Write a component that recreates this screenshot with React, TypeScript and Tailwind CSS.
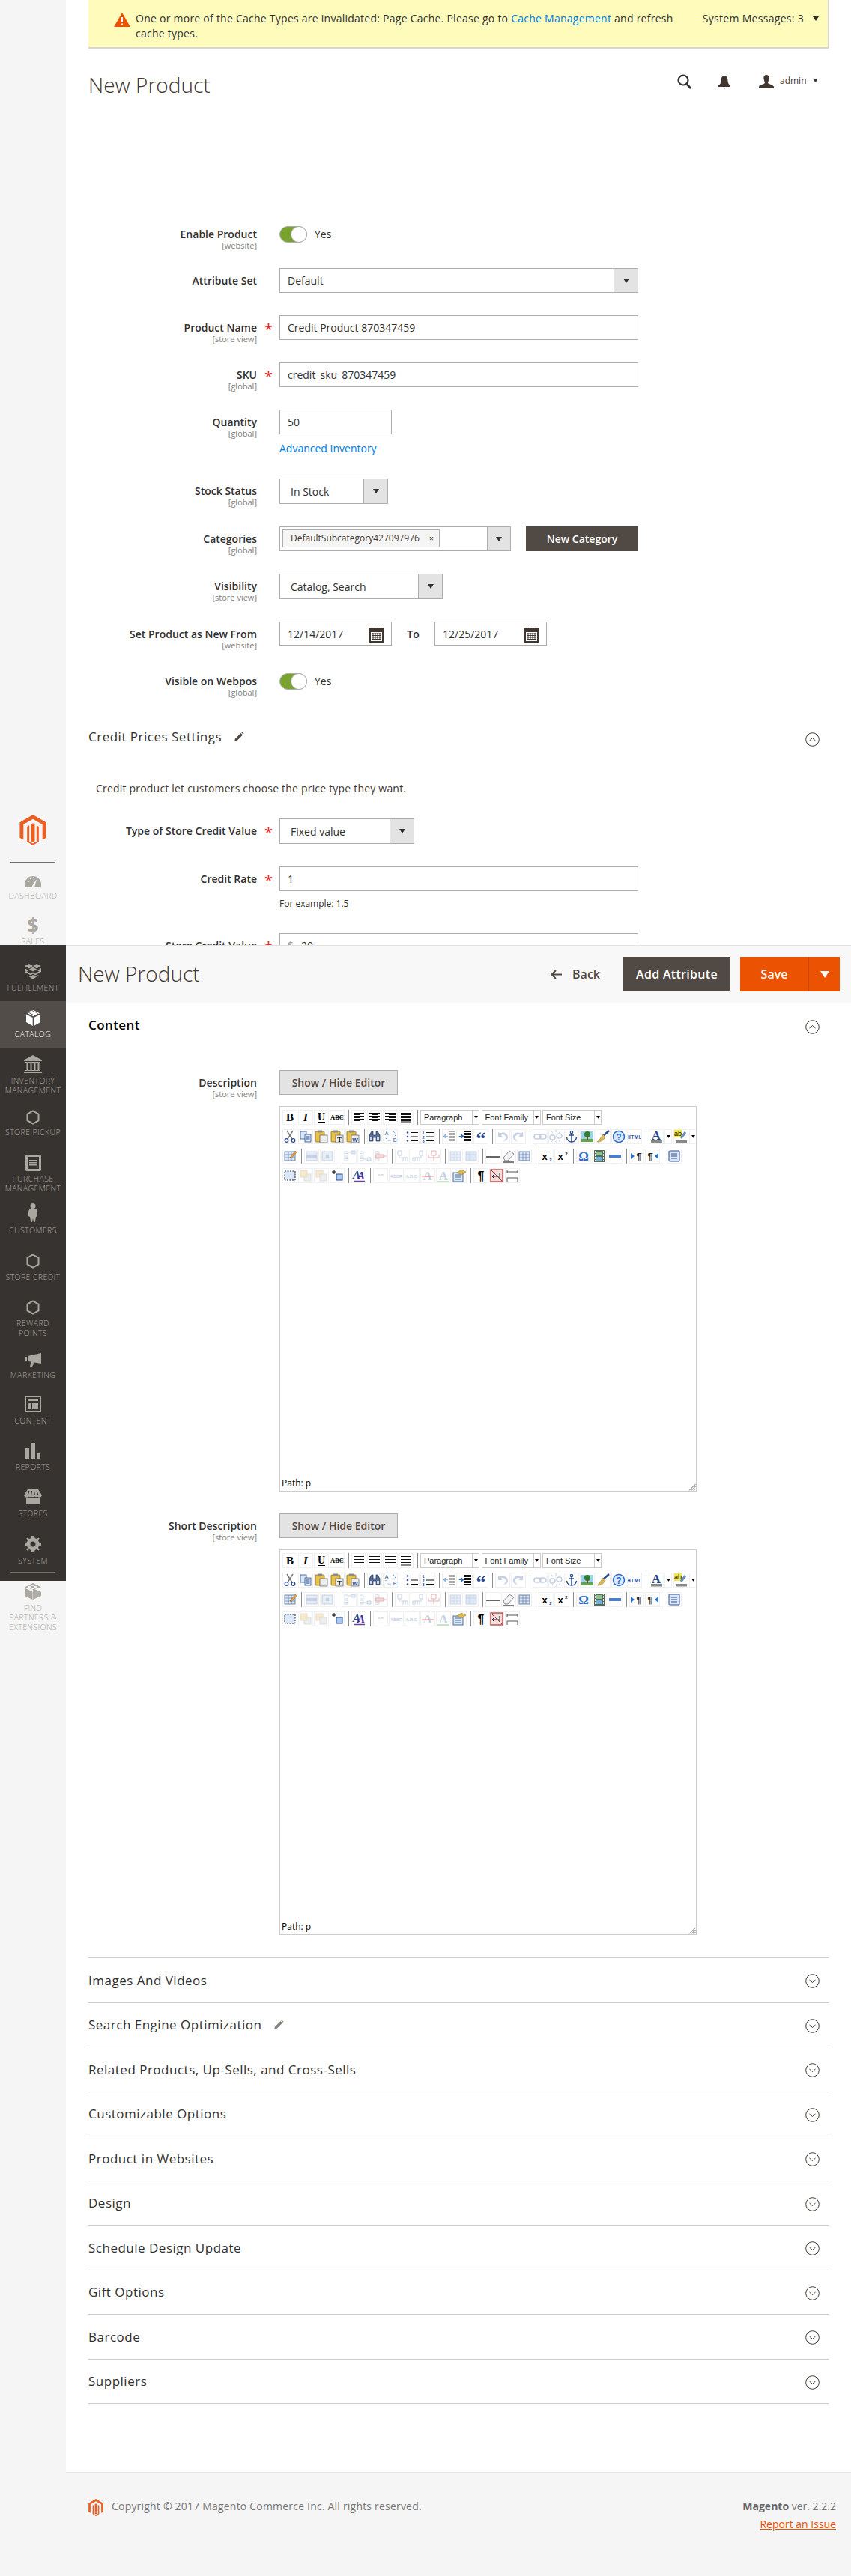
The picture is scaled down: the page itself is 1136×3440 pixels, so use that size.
import React from "react";

const Chevron = ({ up }: { up?: boolean }) => (
  <svg width="19" height="19" viewBox="0 0 19 19" className="shrink-0">
    <circle cx="9.5" cy="9.5" r="8.8" fill="none" stroke="#41362f" strokeWidth="1" />
    <path d={up ? "M5.5 11 L9.5 7.5 L13.5 11" : "M5.5 8 L9.5 11.5 L13.5 8"} fill="none" stroke="#41362f" strokeWidth="1" />
  </svg>
);

const Pencil = ({ color = "#514943" }: { color?: string }) => (
  <svg width="14" height="14" viewBox="0 0 14 14">
    <path d="M1 13 L2 9.5 L9.5 2 L12 4.5 L4.5 12 Z" fill={color} />
    <path d="M10.3 1.2 L11.3 .4 L13.6 2.7 L12.7 3.7 Z" fill={color} />
  </svg>
);

const MLogo = ({ w, h }: { w: number; h: number }) => (
  <svg width={w} height={h} viewBox="0 0 36 42">
    <path d="M18 0 L36 10.5 V31.5 L31 34.4 V13.4 L18 6 L5 13.4 V34.4 L0 31.5 V10.5 Z" fill="#eb5f22" />
    <path d="M15.5 13 L18 11.6 L20.5 13 V36 L18 37.4 L15.5 36 Z" fill="#eb5f22" />
    <path d="M10 16.3 L13 14.6 V36.6 L18 39.4 L23 36.6 V14.6 L26 16.3 V37 L18 42 L10 37 Z" fill="#eb5f22" />
  </svg>
);

const Hex = () => (
  <svg width="18" height="20" viewBox="0 0 18 20">
    <path d="M9 1.5 L16.5 5.7 V14.3 L9 18.5 L1.5 14.3 V5.7 Z" fill="none" stroke="currentColor" strokeWidth="2" />
  </svg>
);

const SideIcons: Record<string, React.ReactNode> = {
  dashboard: (
    <svg width="22" height="16" viewBox="0 0 22 16">
      <path d="M0 16 V12 A11 11 0 0 1 22 12 V16 H13 L16 5 L10 14 L10 16 Z" fill="currentColor" />
      <circle cx="5" cy="8" r="1" fill="#f5f5f5" />
      <circle cx="8" cy="4.5" r="1" fill="#f5f5f5" />
      <circle cx="12" cy="3" r="1" fill="#f5f5f5" />
    </svg>
  ),
  sales: <span className="text-[27px] leading-[24px] font-bold text-current">$</span>,
  fulfillment: (
    <svg width="22" height="21" viewBox="0 0 22 21">
      <path d="M6 0 L11 3 L6 6.5 L0 3 Z M16 0 L22 3 L16 6.5 L11 3 Z M6 7.5 L11 4.5 L16 7.5 L11 10.5 Z M0 6 L5 9 L3 10.5 L8 13.5 L11 11.5 L14 13.5 L19 10.5 L17 9 L22 6 L22 11 L14 15.5 L11 13.5 L8 15.5 L0 11 Z" fill="currentColor" />
      <path d="M3 15 L8 17 L11 15 L14 17 L19 15 L11 21 Z" fill="currentColor" />
    </svg>
  ),
  catalog: (
    <svg width="19" height="21" viewBox="0 0 19 21">
      <path d="M0 5.5 L8.7 10 V21 L0 16 Z" fill="currentColor" />
      <path d="M19 5.5 L10.3 10 V21 L19 16 Z" fill="currentColor" />
      <path d="M3 2.6 L7 .6 L15.5 4.8 L11.5 7 Z" fill="currentColor" />
      <path d="M1.5 4 L2.6 3.3 L10.8 7.4 L9.5 8.3 Z" fill="currentColor" />
      <path d="M8.2 .2 L9.5 0 L18 4.2 L16.5 4.9 Z" fill="currentColor" />
    </svg>
  ),
  inventory: (
    <svg width="24" height="24" viewBox="0 0 24 24">
      <path d="M12 0 L24 6.5 V8 H0 V6.5 Z" fill="currentColor" />
      <path d="M2 9 H22 V10 H2 Z M2 20 H22 V21 H2 Z M0 22 H24 V24 H0 Z" fill="currentColor" />
      <path d="M3.5 10 H5.5 V20 H3.5 Z M8.5 10 H10.5 V20 H8.5 Z M13.5 10 H15.5 V20 H13.5 Z M18.5 10 H20.5 V20 H18.5 Z" fill="currentColor" />
    </svg>
  ),
  hex: <Hex />,
  purchase: (
    <svg width="21" height="22" viewBox="0 0 21 22">
      <path fillRule="evenodd" d="M2 0 H19 Q21 0 21 2 V20 Q21 22 19 22 H2 Q0 22 0 20 V2 Q0 0 2 0 Z M3 3 V19 H18 V3 Z" fill="currentColor" />
      <path d="M5 7 H16 V8.5 H5 Z M5 10 H16 V11.5 H5 Z M5 13 H16 V14.5 H5 Z M5 16 H16 V17 H5 Z" fill="currentColor" />
    </svg>
  ),
  customers: (
    <svg width="12" height="25" viewBox="0 0 12 25">
      <circle cx="6" cy="3.6" r="3.6" fill="currentColor" />
      <path d="M1.5 8 H10.5 L12 10 V17 L10 18 L8.8 25 H7 L6 20 L5 25 H3.2 L2 18 L0 17 V10 Z" fill="currentColor" />
    </svg>
  ),
  marketing: (
    <svg width="22" height="18" viewBox="0 0 22 18">
      <path d="M0 5 H3 V10 H0 Z M4 4 L22 0 V14 L13 12.5 L10 18 H7 L8.5 11.5 L4 11 Z" fill="currentColor" />
    </svg>
  ),
  content: (
    <svg width="22" height="22" viewBox="0 0 22 22">
      <path fillRule="evenodd" d="M0 0 H22 V22 H0 Z M2 2 V20 H20 V2 Z" fill="currentColor" />
      <path d="M4 4 H18 V7 H4 Z M4 9 H8 V18 H4 Z M10 9 H18 V18 H10 Z" fill="currentColor" />
    </svg>
  ),
  reports: (
    <svg width="20" height="21" viewBox="0 0 20 21">
      <path d="M0 7 H5 V21 H0 Z M8 0 H13 V21 H8 Z M15.5 14 H20 V21 H15.5 Z" fill="currentColor" />
    </svg>
  ),
  stores: (
    <svg width="24" height="20" viewBox="0 0 24 20">
      <path d="M3 20 V11 H21 V20 Z" fill="currentColor" />
      <path d="M5 0 H19 L24 8 Q23 11 21 10.5 Q19 11 18 9.5 Q16 11 14.5 9.5 Q12 11 9.5 9.5 Q8 11 6 9.5 Q5 11 3 10.5 Q1 11 0 8 Z" fill="currentColor" />
      <path d="M7 2 L5 8 M10.5 2 L9.5 8 M13.5 2 L14.5 8 M17 2 L19 8" stroke="#373330" strokeWidth="1.2" />
    </svg>
  ),
  system: (
    <svg width="22" height="22" viewBox="0 0 22 22">
      <path fillRule="evenodd" d="M9 0 H13 L13.6 3 L16 4 L18.6 2.4 L19.6 3.4 L18 6 L19 8.4 L22 9 V13 L19 13.6 L18 16 L19.6 18.6 L18.6 19.6 L16 18 L13.6 19 L13 22 H9 L8.4 19 L6 18 L3.4 19.6 L2.4 18.6 L4 16 L3 13.6 L0 13 V9 L3 8.4 L4 6 L2.4 3.4 L3.4 2.4 L6 4 L8.4 3 Z M11 7.5 A3.5 3.5 0 1 0 11 14.5 A3.5 3.5 0 1 0 11 7.5 Z" fill="currentColor" />
    </svg>
  ),
  partners: (
    <svg width="22" height="22" viewBox="0 0 22 22">
      <path d="M11 7 L22 12 V17 L11 22 Z" fill="currentColor" opacity=".9" />
      <path d="M11 8.5 L0 5.5 L11 0 L22 5.5 Z" fill="currentColor" />
      <path d="M0 6.5 L10.5 11.5 V22 L0 17 Z" fill="currentColor" />
      <ellipse cx="7" cy="5" rx="2.4" ry="1.3" fill="#f5f5f5" />
      <ellipse cx="15" cy="5" rx="2.4" ry="1.3" fill="#f5f5f5" />
      <ellipse cx="11" cy="3" rx="2.4" ry="1.1" fill="#f5f5f5" />
      <ellipse cx="11" cy="7" rx="2.4" ry="1.1" fill="#f5f5f5" />
    </svg>
  ),
};

function SideItem({ icon, lines, shift = "", active, h = "h-[62px]" }: { icon: string; lines: string[]; shift?: string; active?: boolean; h?: string }) {
  return (
    <div className={`flex flex-col items-center ${h} ${active ? "bg-[#524d49] text-white" : ""}`}>
      <div className="h-[28px] mt-[8px] flex items-center justify-center">
        <div className={`flex ${shift}`}>{SideIcons[icon]}</div>
      </div>
      <div className={`mt-[1.5px] text-[10.5px] leading-[13px] font-light tracking-[0.4px] text-center whitespace-nowrap ${active ? "text-white" : ""}`}>
        {lines.map((l) => (
          <div key={l}>{l}</div>
        ))}
      </div>
    </div>
  );
}

function Sidebar() {
  return (
    <aside className="w-[88px] shrink-0 bg-[#f5f5f5] pt-[1088px] flex flex-col text-[#aaa6a0]">
      <div className="flex justify-center">
        <MLogo w={36} h={41} />
      </div>
      <div className="mx-[14px] mt-[22px] h-px bg-[#736d68]" />
      <SideItem icon="dashboard" lines={["DASHBOARD"]} shift="mt-[6px]" h="h-[61px]" />
      <div className="h-[49px] overflow-hidden">
        <SideItem icon="sales" lines={["SALES"]} />
      </div>
      <div className="bg-[#373330] h-[849px]">
        <SideItem icon="fulfillment" lines={["FULFILLMENT"]} h="h-[75px] pt-[13px]" />
        <SideItem icon="catalog" lines={["CATALOG"]} active />
        <SideItem icon="inventory" lines={["INVENTORY", "MANAGEMENT"]} h="h-[69px]" />
        <SideItem icon="hex" lines={["STORE PICKUP"]} shift="mt-[4px]" />
        <SideItem icon="purchase" lines={["PURCHASE", "MANAGEMENT"]} shift="mt-[2px]" h="h-[69px]" />
        <SideItem icon="customers" lines={["CUSTOMERS"]} shift="mb-[4px]" />
        <SideItem icon="hex" lines={["STORE CREDIT"]} shift="mt-[2px]" />
        <SideItem icon="hex" lines={["REWARD", "POINTS"]} shift="mt-[2px]" h="h-[69px]" />
        <SideItem icon="marketing" lines={["MARKETING"]} shift="mt-[4px]" h="h-[61px]" />
        <SideItem icon="content" lines={["CONTENT"]} />
        <SideItem icon="reports" lines={["REPORTS"]} />
        <SideItem icon="stores" lines={["STORES"]} h="h-[63px]" />
        <SideItem icon="system" lines={["SYSTEM"]} h="h-[61px]" />
        <div className="mx-[14px] mt-[-2px] h-px bg-[#736d68]" />
      </div>
      <SideItem icon="partners" lines={["FIND", "PARTNERS &", "EXTENSIONS"]} h="h-[90px] mt-[-8px]" />
    </aside>
  );
}

function Label({ text, scope }: { text?: string; scope?: string }) {
  return (
    <div className="w-[225px] shrink-0 pt-[8px] text-right">
      <div className="text-[14px] leading-[18px] font-semibold text-[#303030]">{text}</div>
      {scope && <div className="text-[11px] leading-[12px] text-[#808080]">[{scope}]</div>}
    </div>
  );
}

function Row({ text, scope, req, children, h = "h-[33px]" }: { text: string; scope?: string; req?: boolean; children?: React.ReactNode; h?: string }) {
  return (
    <div className={`flex ${h}`}>
      <Label text={text} scope={scope} />
      <div className="w-[30px] shrink-0 pl-[10px] pt-[8px] text-[#e22626] text-[20px] leading-[22px]">{req ? "*" : ""}</div>
      <div className="flex-1">{children}</div>
    </div>
  );
}

const Input = ({ value, w = "w-[479px]", h = "h-[33px]" }: { value: string; w?: string; h?: string }) => (
  <div className={`${w} ${h} border border-[#adadad] bg-white flex items-center pl-[10px] text-[14px] text-[#303030]`}>{value}</div>
);

const Tri = ({ w = 8, color = "#303030" }: { w?: number; color?: string }) => (
  <svg width={w} height={w * 0.75} viewBox="0 0 8 6">
    <path d="M0 0 H8 L4 6 Z" fill={color} />
  </svg>
);

const Select = ({ value, w, h = "h-[33px]", pl = "pl-[10px]" }: { value: string; w: string; h?: string; pl?: string }) => (
  <div className={`${w} ${h} border border-[#adadad] bg-white flex text-[14px] text-[#303030]`}>
    <div className={`flex-1 flex items-center ${pl}`}>{value}</div>
    <div className="w-[32px] bg-[#e3e3e3] border-l border-[#adadad] flex items-center justify-center">
      <Tri />
    </div>
  </div>
);

const Toggle = () => (
  <div className="flex items-center h-[33px]">
    <div className="relative w-[37px] h-[22px] rounded-full bg-[#79a22e] border border-[#adadad]">
      <div className="absolute right-[-1px] top-[-1px] w-[22px] h-[22px] rounded-full bg-white border border-[#adadad]" />
    </div>
    <span className="ml-[10px] text-[14px] text-[#303030]">Yes</span>
  </div>
);

const Calendar = () => (
  <svg width="21" height="22" viewBox="0 0 21 22">
    <path d="M1 3 H20 V22 H1 Z" fill="#41362f" />
    <path d="M3 8 H18 V20 H3 Z" fill="#fff" />
    <path d="M5 2 H7 V6 H5 Z M14 2 H16 V6 H14 Z" fill="#41362f" />
    <path d="M5 10 H16 M5 12.5 H16 M5 15 H16 M5 17.5 H16 M6 9 V19 M9 9 V19 M12 9 V19 M15 9 V19" stroke="#41362f" strokeWidth="1" />
  </svg>
);

const DateField = ({ value }: { value: string }) => (
  <div className="w-[150px] h-[33px] border border-[#adadad] bg-white flex items-center justify-between pl-[10px] pr-[9px] text-[14px] text-[#303030]">
    <span>{value}</span>
    <Calendar />
  </div>
);

function TopForm() {
  return (
    <div className="h-[1262px] overflow-hidden bg-white px-[30px]">
      <div className="h-[65px] bg-[#fffbbb] border-b-2 border-r border-[#d6d6d6] flex pl-[34px] pr-[12px]">
        <div className="pt-[17px]">
          <svg width="22" height="19" viewBox="0 0 22 19">
            <path d="M11 0 L22 19 H0 Z" fill="#eb5202" />
            <path d="M10 6 H12 V13 H10 Z M10 14.5 H12 V16.5 H10 Z" fill="#fff" />
          </svg>
        </div>
        <div className="ml-[7px] w-[724px] pt-[15px] text-[14px] leading-[20px] tracking-[0.25px] text-[#303030]">
          One or more of the Cache Types are invalidated: Page Cache. Please go to <span className="text-[#007bdb]">Cache Management</span> and refresh cache types.
        </div>
        <div className="ml-[36px] pt-[15px] flex text-[14px] leading-[20px] tracking-[0.3px] text-[#303030] whitespace-nowrap">
          System Messages: 3
          <span className="ml-[12px] mt-[7px]">
            <Tri />
          </span>
        </div>
      </div>
      <div className="flex justify-between mt-[30px]">
        <h1 className="text-[28px] leading-[36px] font-light text-[#41362f]">New Product</h1>
        <div className="flex items-start pt-[4px] pr-[14px] text-[#41362f]">
          <svg width="20" height="20" viewBox="0 0 20 20">
            <circle cx="8" cy="8" r="6.5" fill="none" stroke="#303030" strokeWidth="2.2" />
            <path d="M12.5 13 L18 19" stroke="#303030" strokeWidth="2.6" />
          </svg>
          <svg width="16" height="18" viewBox="0 0 16 18" className="ml-[35px] mt-[2px]">
            <path d="M8 0 C11 0 12.5 3 12.5 7 C12.5 10 14 12 16 13.5 V15 H0 V13.5 C2 12 3.5 10 3.5 7 C3.5 3 5 0 8 0 Z M6.5 16 H9.5 L8 18 Z" fill="#41362f" />
          </svg>
          <svg width="20" height="18" viewBox="0 0 20 18" className="ml-[38px] mt-[1px]">
            <path d="M10 0 C13 0 14 2.5 13.5 5.5 C13 8 12 9.5 12 11 C13 12.5 20 13.5 20 16 V18 H0 V16 C0 13.5 7 12.5 8 11 C8 9.5 7 8 6.500 5.500 C6 2.500 7 0 10 0 Z" fill="#41362f" />
          </svg>
          <span className="ml-[8px] w-[35px] text-[12px] leading-[18px] text-[#41362f]">admin</span>
          <span className="ml-[9px] mt-[6px]">
            <Tri w={7} color="#41362f" />
          </span>
        </div>
      </div>
      <div className="mt-[165px] flex flex-col gap-[30px]">
        <Row text="Enable Product" scope="website" h="h-[32px]">
          <Toggle />
        </Row>
        <Row text="Attribute Set">
          <Select value="Default" w="w-[479px]" />
        </Row>
        <Row text="Product Name" scope="store view" req>
          <Input value="Credit Product 870347459" />
        </Row>
        <Row text="SKU" scope="global" req>
          <Input value="credit_sku_870347459" />
        </Row>
        <Row text="Quantity" scope="global" h="h-[62px]">
          <Input value="50" w="w-[150px]" />
          <div className="mt-[9px] text-[14px] leading-[20px] text-[#007bdb]">Advanced Inventory</div>
        </Row>
        <Row text="Stock Status" scope="global" h="h-[34px]">
          <Select value="In Stock" w="w-[145px]" h="h-[34px]" pl="pl-[14px]" />
        </Row>
        <Row text="Categories" scope="global">
          <div className="flex">
            <div className="w-[309px] h-[33px] border border-[#adadad] bg-white flex">
              <div className="flex-1 pl-[3px] pt-[3px]">
                <div className="w-[210px] h-[24px] border border-[#adadad] bg-[#f5f5f5] flex items-center justify-between pl-[10px] pr-[7px] text-[12px] text-[#41362f]">
                  <span>DefaultSubcategory427097976</span>
                  <span className="text-[11px] text-[#514943]">×</span>
                </div>
              </div>
              <div className="w-[31px] bg-[#e3e3e3] border-l border-[#adadad] flex items-center justify-center">
                <Tri />
              </div>
            </div>
            <div className="ml-[20px] w-[150px] h-[33px] bg-[#514943] text-white text-[14px] font-semibold flex items-center justify-center">New Category</div>
          </div>
        </Row>
        <Row text="Visibility" scope="store view" h="h-[34px]">
          <Select value="Catalog, Search" w="w-[218px]" h="h-[34px]" pl="pl-[14px]" />
        </Row>
        <Row text="Set Product as New From" scope="website">
          <div className="flex items-center">
            <DateField value="12/14/2017" />
            <span className="w-[57px] text-center text-[14px] font-semibold text-[#303030]">To</span>
            <DateField value="12/25/2017" />
          </div>
        </Row>
        <Row text="Visible on Webpos" scope="global">
          <Toggle />
        </Row>
      </div>
      <div className="mt-[46px] flex items-center justify-between pr-[12px] h-[24px]">
        <div className="flex items-center">
          <span className="text-[17px] font-medium tracking-[0.5px] text-[#303030]">Credit Prices Settings</span>
          <span className="ml-[16px] flex">
            <Pencil />
          </span>
        </div>
        <span className="mt-[6px] flex">
          <Chevron up />
        </span>
      </div>
      <p className="mt-[47px] pl-[10px] text-[14px] leading-[20px] tracking-[0.2px] text-[#41362f]">Credit product let customers choose the price type they want.</p>
      <div className="mt-[30px] flex flex-col gap-[30px]">
        <Row text="Type of Store Credit Value" req h="h-[34px]">
          <Select value="Fixed value" w="w-[180px]" h="h-[34px]" pl="pl-[14px]" />
        </Row>
        <Row text="Credit Rate" req h="h-[59px]">
          <Input value="1" />
          <div className="mt-[8px] text-[12px] leading-[18px] text-[#303030]">For example: 1.5</div>
        </Row>
        <Row text="Store Credit Value" req>
          <div className="w-[479px] h-[33px] border border-[#adadad] bg-white flex items-center text-[14px] text-[#303030]">
            <span className="w-[28px] pl-[10px] text-[#999]">$</span>
            20
          </div>
        </Row>
      </div>
    </div>
  );
}

function StickyBar() {
  return (
    <div className="h-[78px] bg-[#f8f8f8] border-y border-[#e3e3e3] flex items-center justify-between pl-[16px] pr-[15px]">
      <div className="text-[28px] font-light text-[#41362f] mb-[2px]">New Product</div>
      <div className="flex items-center">
        <svg width="15" height="13" viewBox="0 0 15 13" className="mr-[14px]">
          <path d="M7 1 L1.500 6.500 L7 12 M1.500 6.500 H15" fill="none" stroke="#514943" strokeWidth="2" />
        </svg>
        <span className="text-[16px] font-semibold text-[#514943]">Back</span>
        <div className="ml-[31px] w-[143px] h-[46px] bg-[#514943] text-white text-[16px] font-semibold flex items-center justify-center tracking-[0.3px]">Add Attribute</div>
        <div className="ml-[13px] w-[133px] h-[46px] bg-[#eb5202] text-white text-[16px] font-semibold flex">
          <div className="w-[92px] border-r border-[#c9460a] flex items-center justify-center">Save</div>
          <div className="flex-1 flex items-center justify-center">
            <svg width="12" height="9" viewBox="0 0 12 9">
              <path d="M0 0 H12 L6 9 Z" fill="#fff" />
            </svg>
          </div>
        </div>
      </div>
    </div>
  );
}

const N = "#2b4a8f";
const D = "#c5d0e2";
const K = "#111";
const Page = ({ x, y, c = "#fff", s = N }: { x: number; y: number; c?: string; s?: string }) => (
  <rect x={x} y={y} width="8" height="10" fill={c} stroke={s} strokeWidth=".8" />
);
const lines = (ys: number[], x1: number, x2: number, c = K) => ys.map((y) => <path key={y + "-" + x1} d={`M${x1} ${y} H${x2}`} stroke={c} strokeWidth="1" />);
const alt = (x3: number, x4: number) => (
  <>
    {lines([4.5, 8.5, 12.5], 3, 17)}
    {lines([6.5, 10.5, 14.5], x3, x4)}
  </>
);
const Clip = ({ children }: { children?: React.ReactNode }) => (
  <>
    <rect x="2" y="3" width="12" height="14" rx="1" fill="#e8c24a" stroke="#8a6a1e" strokeWidth=".8" />
    <rect x="5" y="1.500" width="6" height="3" fill="#8a8a8a" />
    <rect x="8" y="8" width="10" height="10" fill="#eee" stroke="#555" strokeWidth=".7" />
    {children}
  </>
);
const grid = (c: string, fill: string) => (
  <>
    <rect x="3" y="4" width="14" height="12" fill={fill} stroke={c} strokeWidth=".8" />
    <path d="M3 8 H17 M3 12 H17 M8 4 V16 M12 4 V16" stroke={c} strokeWidth=".6" />
  </>
);
const stepIcon = (a: React.ReactNode) => (
  <>
    <path d="M3 4 H8 V9 H3 M3 11 H8 V16 H3 M3 6.500 H8 M3 13.500 H8" fill="none" stroke={D} strokeWidth=".8" />
    {a}
  </>
);
const T: Record<string, React.ReactNode> = {
  bold: <text x="10" y="15" textAnchor="middle" fontFamily="Liberation Serif" fontWeight="700" fontSize="15" fill="#000">B</text>,
  italic: <text x="10" y="15" textAnchor="middle" fontFamily="Liberation Serif" fontStyle="italic" fontWeight="700" fontSize="15" fill="#000">I</text>,
  underline: (
    <>
      <text x="10" y="14" textAnchor="middle" fontFamily="Liberation Serif" fontWeight="700" fontSize="14" fill="#000">U</text>
      <path d="M5 16.500 H15" stroke="#000" />
    </>
  ),
  strike: (
    <>
      <text x="10" y="13" textAnchor="middle" fontFamily="Liberation Serif" fontSize="8.500" fontWeight="700" fill="#000">ABC</text>
      <path d="M2 10 H18" stroke="#000" strokeWidth=".8" />
    </>
  ),
  left: alt(3, 12),
  center: alt(6, 14),
  right: alt(8, 17),
  full: lines([4.5, 6.5, 8.5, 10.5, 12.5, 14.5, 16], 3, 17),
  cut: (
    <>
      <path d="M6 2 L13 13 M14 2 L7 13" stroke="#777" strokeWidth="1.400" />
      <circle cx="5.500" cy="15" r="2.300" fill="none" stroke={N} strokeWidth="1.300" />
      <circle cx="14.500" cy="15" r="2.300" fill="none" stroke={N} strokeWidth="1.300" />
    </>
  ),
  copy: (
    <>
      <Page x={3} y={3} c="#dbe8f8" />
      <Page x={9} y={7} c="#dbe8f8" />
      {lines([10, 12, 14], 10.5, 15.500, N)}
    </>
  ),
  paste: <Clip />,
  pastetext: (
    <Clip>
      <text x="13" y="16.500" textAnchor="middle" fontFamily="Liberation Serif" fontWeight="700" fontSize="9" fill="#000">T</text>
    </Clip>
  ),
  pasteword: (
    <Clip>
      <text x="13" y="16.500" textAnchor="middle" fontFamily="Liberation Sans" fontWeight="700" fontSize="8" fill={N}>W</text>
    </Clip>
  ),
  find: (
    <>
      <path d="M3 8 L6 3 H8 V8 H12 V3 H14 L17 8 V16 H12 V11 H8 V16 H3 Z" fill="#5a6f96" stroke="#22345a" strokeWidth=".7" />
      <rect x="4" y="11" width="3" height="4" fill="#c6d6ee" />
      <rect x="13" y="11" width="3" height="4" fill="#c6d6ee" />
    </>
  ),
  replace: (
    <>
      <text x="5" y="8" fontFamily="Liberation Sans" fontSize="7" fill={N} textAnchor="middle">A</text>
      <text x="16" y="17" fontFamily="Liberation Sans" fontSize="7" fill={N} textAnchor="middle">B</text>
      <path d="M14 3 C17 5 17 7 16 10 M4 10 C4 14 6 16 11 15" fill="none" stroke="#3b78d8" strokeDasharray="1 1" />
    </>
  ),
  bullist: (
    <>
      <circle cx="4" cy="4.500" r="1.300" fill={N} />
      <circle cx="4" cy="10" r="1.300" fill={N} />
      <circle cx="4" cy="15.500" r="1.300" fill={N} />
      {lines([4.5, 10, 15.5], 8, 18)}
    </>
  ),
  numlist: (
    <>
      <text x="4" y="7" fontFamily="Liberation Sans" fontWeight="700" fontSize="5.500" fill={N} textAnchor="middle">1</text>
      <text x="4" y="12.500" fontFamily="Liberation Sans" fontWeight="700" fontSize="5.500" fill={N} textAnchor="middle">2</text>
      <text x="4" y="18" fontFamily="Liberation Sans" fontWeight="700" fontSize="5.500" fill={N} textAnchor="middle">3</text>
      {lines([4.5, 10, 15.5], 8, 18)}
    </>
  ),
  outdent: (
    <>
      {lines([3.5, 5.5, 7.5, 9.5, 11.5, 13.5, 15.5], 9, 17, "#aaa")}
      <path d="M2 9.500 L5 7 V12 Z M5 9.500 H8" fill="#8fb0de" stroke="#8fb0de" />
    </>
  ),
  indent: (
    <>
      {lines([3.5, 5.5, 7.5, 9.5, 11.5, 13.5, 15.5], 9, 18)}
      <path d="M8 9.500 L5 7 V12 Z M2 9.500 H5" fill="#2e6bc6" stroke="#2e6bc6" />
    </>
  ),
  blockquote: <text x="10" y="21" textAnchor="middle" fontFamily="Liberation Serif" fontWeight="700" fontSize="26" fill={N}>“</text>,
  undo: <path d="M4 4 V10 H10 L7.500 7.800 C10 6 13 7 14 10 C14.500 13 13 15 11 16 C15 16 17 13 17 10 C16 5 11 3 6.500 5.600 Z" fill={D} />,
  redo: <path d="M16 4 V10 H10 L12.500 7.800 C10 6 7 7 6 10 C5.500 13 7 15 9 16 C5 16 3 13 3 10 C4 5 9 3 13.500 5.600 Z" fill={D} />,
  link: (
    <>
      <rect x="2" y="7" width="9" height="6" rx="3" fill="none" stroke={D} strokeWidth="1.600" />
      <rect x="9" y="7" width="9" height="6" rx="3" fill="none" stroke={D} strokeWidth="1.600" />
    </>
  ),
  unlink: (
    <>
      <rect x="2" y="8" width="7" height="6" rx="3" fill="none" stroke={D} strokeWidth="1.600" />
      <rect x="11" y="6" width="7" height="6" rx="3" fill="none" stroke={D} strokeWidth="1.600" />
      <path d="M10 1 V4 M10 16 V19 M4 3 L6 5 M16 3 L14 5 M4 17 L6 15 M16 17 L14 15" stroke={D} />
    </>
  ),
  anchor: (
    <>
      <circle cx="10" cy="4" r="1.700" fill="none" stroke={N} strokeWidth="1.200" />
      <path d="M10 5.500 V17 M7 8 H13 M3.500 11 C4 15 7 17 10 17 C13 17 16 15 16.500 11" fill="none" stroke={N} strokeWidth="1.500" />
    </>
  ),
  image: (
    <>
      <rect x="2" y="3" width="16" height="14" fill="#9fd1ef" />
      <rect x="2" y="13" width="16" height="4" fill="#5aa84a" />
      <circle cx="10" cy="7" r="4" fill="#2f7f2d" />
      <rect x="9" y="9" width="2" height="5" fill="#7a4a1f" />
    </>
  ),
  cleanup: (
    <>
      <path d="M18 2 L10 9" stroke={N} strokeWidth="2.500" />
      <path d="M10 7 L13 10 C11 15 7 17 2 17 C5 15 7 11 10 7 Z" fill="#d9b85a" stroke="#8a6a1e" strokeWidth=".5" />
    </>
  ),
  help: (
    <>
      <circle cx="10" cy="10" r="7.500" fill="#d9e8fb" stroke="#2e6bc6" strokeWidth="1.500" />
      <text x="10" y="14.500" textAnchor="middle" fontFamily="Liberation Sans" fontWeight="700" fontSize="12" fill="#2e6bc6">?</text>
    </>
  ),
  html: <text x="10" y="13" textAnchor="middle" fontFamily="Liberation Sans" fontWeight="700" fontSize="7" letterSpacing=".3" fill={N}>HTML</text>,
  fore: (
    <>
      <text x="10" y="14" textAnchor="middle" fontFamily="Liberation Serif" fontWeight="700" fontSize="17" fill={N}>A</text>
      <rect x="3" y="15" width="15" height="3.500" fill="#888" />
    </>
  ),
  back: (
    <>
      <rect x="1" y="1" width="10" height="10" fill="#f5e84a" />
      <text x="6" y="9" textAnchor="middle" fontFamily="Liberation Sans" fontSize="9" fill="#000">ab</text>
      <path d="M16 4 L10 12" stroke="#6a8ab8" strokeWidth="3" />
      <rect x="3" y="15" width="15" height="3.500" fill="#888" />
    </>
  ),
  tablecontrols: (
    <>
      {grid("#4a6a9a", "#dce8f6")}
      <path d="M10 12 L17 3 L19 5 L12 13 Z" fill="#e6a23c" stroke="#555" strokeWidth=".4" />
    </>
  ),
  rowprops: (
    <>
      <rect x="3" y="4" width="14" height="12" fill="#e6edf7" stroke={D} />
      <rect x="3" y="8" width="14" height="4" fill={D} />
    </>
  ),
  cellprops: (
    <>
      <rect x="3" y="4" width="14" height="12" fill="#e6edf7" stroke={D} />
      <rect x="8" y="8" width="4" height="4" fill={D} />
    </>
  ),
  rowbefore: stepIcon(<path d="M9 5 H12 M13 3 H18 V7 H13 Z" stroke={D} fill="#e6edf7" />),
  rowafter: stepIcon(<path d="M9 14 H12 M13 12 H18 V16 H13 Z" stroke={D} fill="#e6edf7" />),
  rowdel: stepIcon(<path d="M3 8 H14 V12 H3 Z M14 10 H18" stroke="#e2b3b3" fill="#f3d7d7" />),
  colbefore: <path d="M4 3 H9 V9 H4 Z M6 9 V13 M8 12 H17 V17 M11 12 V17 M14 12 V17" fill="none" stroke={D} />,
  colafter: <path d="M12 3 H16 V9 H12 Z M14 9 V13 M3 12 H12 V17 M3 12 V17 M6 12 V17 M9 12 V17" fill="none" stroke={D} />,
  coldel: <path d="M7 3 H13 V9 H7 Z M10 9 V16 M3 8 V12 H17 V8" fill="none" stroke="#e2b3b3" />,
  split: grid(D, "#eaf0f8"),
  merge: (
    <>
      <rect x="3" y="4" width="14" height="12" fill="#dce8f6" stroke={D} />
      <path d="M3 8 H17 M8 4 V16" stroke={D} />
    </>
  ),
  hr: <path d="M1 11 H19" stroke="#000" strokeWidth="1.200" />,
  removeformat: (
    <>
      <path d="M3 12 L11 3 L17 7 L9 16 L5 16 Z" fill="#f3f3f3" stroke="#667" strokeWidth=".8" />
      <path d="M3 18 H17" stroke="#000" />
    </>
  ),
  table: grid("#4a6a9a", "#dce8f6"),
  sub: (
    <>
      <text x="8" y="15" textAnchor="middle" fontFamily="Liberation Sans" fontWeight="700" fontSize="13" fill="#000">x</text>
      <text x="16" y="17" textAnchor="middle" fontFamily="Liberation Sans" fontWeight="700" fontSize="6" fill={N}>2</text>
    </>
  ),
  sup: (
    <>
      <text x="8" y="15" textAnchor="middle" fontFamily="Liberation Sans" fontWeight="700" fontSize="13" fill="#000">x</text>
      <text x="16" y="9" textAnchor="middle" fontFamily="Liberation Sans" fontWeight="700" fontSize="6" fill={K}>2</text>
    </>
  ),
  omega: <text x="10" y="16" textAnchor="middle" fontFamily="Liberation Serif" fontWeight="700" fontSize="17" fill="#2e6bc6">Ω</text>,
  media: (
    <>
      <rect x="3" y="2" width="14" height="16" fill="#5a6a5a" />
      <rect x="6" y="4" width="8" height="5" fill="#8fc08f" />
      <rect x="6" y="11" width="8" height="5" fill="#6ab0d8" />
      <path d="M4.500 3 V17 M15.500 3 V17" stroke="#ddd" strokeWidth="1" strokeDasharray="1 1" />
    </>
  ),
  advhr: <rect x="2" y="8" width="16" height="4" fill="#4a7fc8" />,
  ltr: (
    <>
      <path d="M2 6 L7 10 L2 14 Z" fill="#2e6bc6" />
      <text x="13" y="15" textAnchor="middle" fontFamily="Liberation Sans" fontWeight="700" fontSize="13" fill="#222">¶</text>
    </>
  ),
  rtl: (
    <>
      <path d="M18 6 L13 10 L18 14 Z" fill="#2e6bc6" />
      <text x="7" y="15" textAnchor="middle" fontFamily="Liberation Sans" fontWeight="700" fontSize="13" fill="#222">¶</text>
    </>
  ),
  fullscreen: (
    <>
      <rect x="3" y="3" width="14" height="14" rx="1" fill="#dbe8f8" stroke={N} />
      {lines([7, 10, 13], 6, 14, N)}
    </>
  ),
  layer: <rect x="3" y="4" width="14" height="12" fill="#dbe8f8" stroke="#223" strokeDasharray="2 1.500" />,
  fwd: (
    <>
      <rect x="8" y="8" width="9" height="9" fill="#eee" stroke="#ddd" />
      <rect x="3" y="3" width="9" height="9" fill="#f6e9c4" stroke="#ddd" />
    </>
  ),
  bwd: (
    <>
      <rect x="3" y="3" width="9" height="9" fill="#f6e9c4" stroke="#ddd" />
      <rect x="8" y="8" width="9" height="9" fill="#eee" stroke="#ddd" />
    </>
  ),
  abs: (
    <>
      <rect x="9" y="8" width="8" height="8" fill="#a9c8ef" stroke={N} />
      <path d="M6 2 V8 M3 5 H9" stroke="#000" />
    </>
  ),
  style: (
    <>
      <text x="7" y="14" textAnchor="middle" fontFamily="Liberation Serif" fontStyle="italic" fontWeight="700" fontSize="15" fill={N}>A</text>
      <text x="13" y="15" textAnchor="middle" fontFamily="Liberation Serif" fontStyle="italic" fontWeight="700" fontSize="15" fill="#4a2f9a">A</text>
      <path d="M3 17.500 H18" stroke="#6a3fa8" strokeWidth="1.500" />
    </>
  ),
  cite: <text x="10" y="13" textAnchor="middle" fontFamily="Liberation Sans" fontWeight="700" fontSize="8" fill={D}>“”</text>,
  abbr: <text x="10" y="13" textAnchor="middle" fontFamily="Liberation Sans" fontWeight="700" fontSize="5.500" fill={D}>ABBR</text>,
  acro: <text x="10" y="13" textAnchor="middle" fontFamily="Liberation Sans" fontWeight="700" fontSize="5.500" fill={D}>A.B.C.</text>,
  del: (
    <>
      <text x="10" y="16" textAnchor="middle" fontFamily="Liberation Serif" fontWeight="700" fontSize="17" fill={D}>A</text>
      <path d="M2 11 H18" stroke="#e88" />
    </>
  ),
  ins: (
    <>
      <text x="10" y="16" textAnchor="middle" fontFamily="Liberation Serif" fontWeight="700" fontSize="17" fill={D}>A</text>
      <path d="M2 18 H18" stroke="#8c8" />
    </>
  ),
  attribs: (
    <>
      <rect x="2" y="6" width="13" height="12" fill="#dce8f6" stroke="#4a6a9a" />
      {lines([9, 12, 15], 4, 13, "#4a6a9a")}
      <path d="M7 6 L13 2 L19 5 L13 9 Z" fill="#d9b85a" stroke="#8a6a1e" strokeWidth=".5" />
    </>
  ),
  para: <text x="10" y="16" textAnchor="middle" fontFamily="Liberation Sans" fontWeight="700" fontSize="16" fill="#000">¶</text>,
  nbsp: (
    <>
      <rect x="2" y="2" width="16" height="16" fill="#f3dede" stroke="#a33" strokeWidth="1.200" />
      <path d="M5 11 H13 M7 8 L4 11 L7 14 M14 6 V14" stroke="#222" fill="none" />
      <path d="M3 3 L17 17" stroke="#a33" />
    </>
  ),
  pagebreak: <path d="M3 7 V3 M17 7 V3 M3 5 H17 M3 18 V13 M17 18 V13 M3 13 H17" fill="none" stroke="#555" />,
};

const Btn = ({ n }: { n: string }) => (
  <span className="w-[20px] h-[20px] mr-[1px] border border-[#f0f0f0] shrink-0 block bg-white">
    <svg width="18" height="18" viewBox="1 1 18 18" className="block">
      {T[n]}
    </svg>
  </span>
);

const Sep = () => <span className="w-px h-[20px] ml-[4px] mr-[3px] bg-[#8c8c8c] shrink-0" />;

const MceSelect = ({ text }: { text: string }) => (
  <span className="w-[79px] h-[20px] mr-[2.5px] border border-[#cccccc] flex shrink-0 bg-white font-['Liberation_Sans',sans-serif] text-[11px] text-[#222]">
    <span className="flex-1 pl-[4px] leading-[18px]">{text}</span>
    <span className="w-[9px] border-l border-[#cccccc] flex items-center justify-center">
      <Tri w={5} color="#000" />
    </span>
  </span>
);

const Arrow = () => (
  <span className="w-[10px] h-[20px] mr-[2px] border border-[#f0f0f0] flex items-center justify-center shrink-0">
    <Tri w={5} color="#000" />
  </span>
);

const R2 = "cut copy paste pastetext pasteword | find replace | bullist numlist | outdent indent blockquote | undo redo | link unlink anchor image cleanup help html | fore > back >";
const R3 = "tablecontrols | rowprops cellprops | rowbefore rowafter rowdel | colbefore colafter coldel | split merge | hr removeformat table | sub sup | omega media advhr | ltr rtl | fullscreen";
const R4 = "layer fwd bwd abs | style | cite abbr acro del ins attribs | para nbsp pagebreak";

const ToolRow = ({ spec }: { spec: string }) => (
  <div className="flex h-[20px] mb-[6px]">
    {spec.split(" ").map((t, i) => (t === "|" ? <Sep key={i} /> : t === ">" ? <Arrow key={i} /> : <Btn key={i} n={t} />))}
  </div>
);

function Editor() {
  return (
    <div className="relative w-[557px] h-[515px] border border-[#cccccc] bg-white pl-[3px] pt-[4px] overflow-hidden">
      <div className="flex h-[20px] mb-[6px]">
        {"bold italic underline strike | left center right full |".split(" ").map((t, i) => (t === "|" ? <Sep key={i} /> : <Btn key={i} n={t} />))}
        <MceSelect text="Paragraph" />
        <MceSelect text="Font Family" />
        <MceSelect text="Font Size" />
      </div>
      <ToolRow spec={R2} />
      <ToolRow spec={R3} />
      <ToolRow spec={R4} />
      <div className="absolute left-[2px] bottom-[1px] text-[12px] leading-[18px] text-black">Path: p</div>
      <svg width="10" height="10" viewBox="0 0 10 10" className="absolute right-0 bottom-0">
        <path d="M9.500 1 L1 9.500 M9.500 4 L4 9.500 M9.500 7 L7 9.500" stroke="#666" strokeWidth="1" />
      </svg>
    </div>
  );
}

const EditorRow = ({ label }: { label: string }) => (
  <div className="flex">
    <Label text={label} scope="store view" />
    <div className="w-[30px] shrink-0" />
    <div>
      <div className="w-[158px] h-[33px] bg-[#e3e3e3] border border-[#adadad] text-[#514943] text-[14px] font-semibold flex items-center justify-center">Show / Hide Editor</div>
      <div className="mt-[15px]">
        <Editor />
      </div>
    </div>
  </div>
);

const sections = ["Images And Videos", "Search Engine Optimization", "Related Products, Up-Sells, and Cross-Sells", "Customizable Options", "Product in Websites", "Design", "Schedule Design Update", "Gift Options", "Barcode", "Suppliers"];

function ContentArea() {
  return (
    <div className="bg-white px-[30px] h-[1961px]">
      <div className="flex justify-between items-start pt-[17px] pr-[12px]">
        <span className="text-[17px] leading-[24px] font-semibold tracking-[0.4px] text-[#000]">Content</span>
        <span className="mt-[5px] flex">
          <Chevron up />
        </span>
      </div>
      <div className="mt-[48px] flex flex-col gap-[29px]">
        <EditorRow label="Description" />
        <EditorRow label="Short Description" />
      </div>
      <div className="mt-[30px] border-t border-[#cccccc]">
        {sections.map((s) => (
          <div key={s} className="h-[59.5px] border-b border-[#cccccc] flex items-center justify-between pr-[12px]">
            <div className="flex items-center">
              <span className="text-[17px] font-medium tracking-[0.5px] text-[#303030]">{s}</span>
              {s === "Search Engine Optimization" && (
                <span className="ml-[16px] flex">
                  <Pencil color="#8a837d" />
                </span>
              )}
            </div>
            <span className="mt-[3px] flex">
              <Chevron />
            </span>
          </div>
        ))}
      </div>
    </div>
  );
}

function Footer() {
  return (
    <div className="flex-1 bg-[#f5f5f5] border-t border-[#e3e3e3] flex justify-between pl-[30px] pr-[20px] pt-[35px]">
      <div className="flex items-start">
        <MLogo w={20} h={23} />
        <span className="ml-[11px] text-[14px] leading-[20px] tracking-[0.2px] text-[#777]">Copyright © 2017 Magento Commerce Inc. All rights reserved.</span>
      </div>
      <div className="text-right text-[14px] leading-[20px] text-[#777]">
        <div>
          <span className="font-bold text-[#666]">Magento</span> ver. 2.2.2
        </div>
        <div className="mt-[4px] text-[#eb5202] underline">Report an Issue</div>
      </div>
    </div>
  );
}

export default function App() {
  return (
    <div className="w-[1136px] h-[3440px] flex overflow-hidden bg-white font-['Open_Sans',sans-serif]">
      <Sidebar />
      <main className="flex-1 min-w-0 flex flex-col">
        <TopForm />
        <StickyBar />
        <ContentArea />
        <Footer />
      </main>
    </div>
  );
}
